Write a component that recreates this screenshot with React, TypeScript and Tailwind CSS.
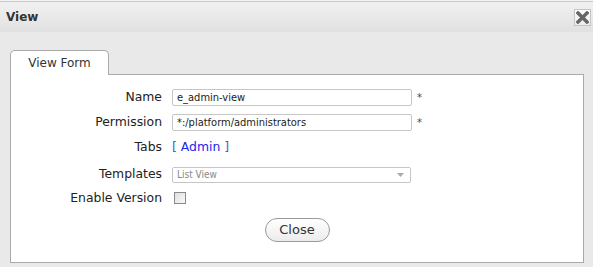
const label = "w-[152px] text-right text-[12.4px] text-[#222] pr-[1px]";
const field =
  "h-[17px] w-[240px] border border-[#c6c6c6] rounded-[2px] bg-white pl-[4px] text-[11px] text-[#222] leading-[15px] font-stretch-condensed [font-family:'DejaVu_Sans_Condensed','DejaVu_Sans',sans-serif]";

const CloseIcon = () => (
  <div className="w-[17px] h-[17px] border border-[#c4c4c4] bg-gradient-to-b from-white to-[#ececec] flex items-center justify-center">
    <svg width="13" height="13" viewBox="0 0 13 13">
      <path d="M2 2 L11 11 M11 2 L2 11" stroke="#666" strokeWidth="3.4" strokeLinecap="square" />
    </svg>
  </div>
);

const App = () => {
  return (
    <div className="w-[593px] h-[267px] overflow-hidden bg-[#e9e9e9] [font-family:'DejaVu_Sans',sans-serif]">
      <div className="h-[1px] bg-[#f4f4f4]" />
      <div className="h-[31px] border-t border-[#c8c8c8] bg-gradient-to-b from-[#f1f1f1] to-[#e1e1e1] flex items-center justify-between pl-[6px] pr-[2px]">
        <span className="text-[12px] font-bold text-[#333]">View</span>
        <CloseIcon />
      </div>

      <div className="pt-[18px] pl-[10px] pr-[9px]">
        <div className="relative z-10 w-[99px] h-[25px] border border-b-0 border-[#aaa] rounded-t-[5px] bg-white flex items-center justify-center text-[12px] text-[#333]">
          View Form
        </div>
        <div className="-mt-[1px] h-[189px] border border-[#aaa] bg-white pt-[10px]">
          <div className="flex items-center h-[24px]">
            <div className={label}>Name</div>
            <input className={`ml-[9px] ${field}`} defaultValue="e_admin-view" readOnly />
            <span className="ml-[5px] text-[10px] text-[#444]">*</span>
          </div>
          <div className="flex items-center h-[26px]">
            <div className={label}>Permission</div>
            <input className={`ml-[9px] ${field}`} defaultValue="*:/platform/administrators" readOnly />
            <span className="ml-[5px] text-[10px] text-[#444]">*</span>
          </div>
          <div className="flex items-center h-[24px]">
            <div className={label}>Tabs</div>
            <div className="ml-[9px] text-[12.4px] text-[#2f66d0]">
              [ <span className="text-[#2424ee]">Admin</span> ]
            </div>
          </div>
          <div className="flex items-center h-[31px]">
            <div className={label}>Templates</div>
            <div className="ml-[9px] h-[16px] w-[239px] border border-[#c6c6c6] rounded-[2px] bg-white flex items-center justify-between pl-[4px] pr-[6px]">
              <span className="text-[10px] text-[#888] font-stretch-condensed [font-family:'DejaVu_Sans_Condensed','DejaVu_Sans',sans-serif]">
                List View
              </span>
              <svg width="7" height="4" viewBox="0 0 7 4">
                <path d="M0 0 L7 0 L3.5 4 Z" fill="#aaa" />
              </svg>
            </div>
          </div>
          <div className="flex items-center h-[16px]">
            <div className={label}>Enable Version</div>
            <div className="ml-[11px] w-[12px] h-[12px] border border-[#8a8a8a] bg-gradient-to-br from-[#e0e0e0] to-[#f8f8f8]" />
          </div>
          <div className="flex justify-center mt-[12px]">
            <button className="h-[24px] w-[65px] rounded-full border border-[#9a9a9a] bg-gradient-to-b from-white to-[#ececec] text-[13px] text-[#333]">
              Close
            </button>
          </div>
        </div>
      </div>
    </div>
  );
};

export default App;
